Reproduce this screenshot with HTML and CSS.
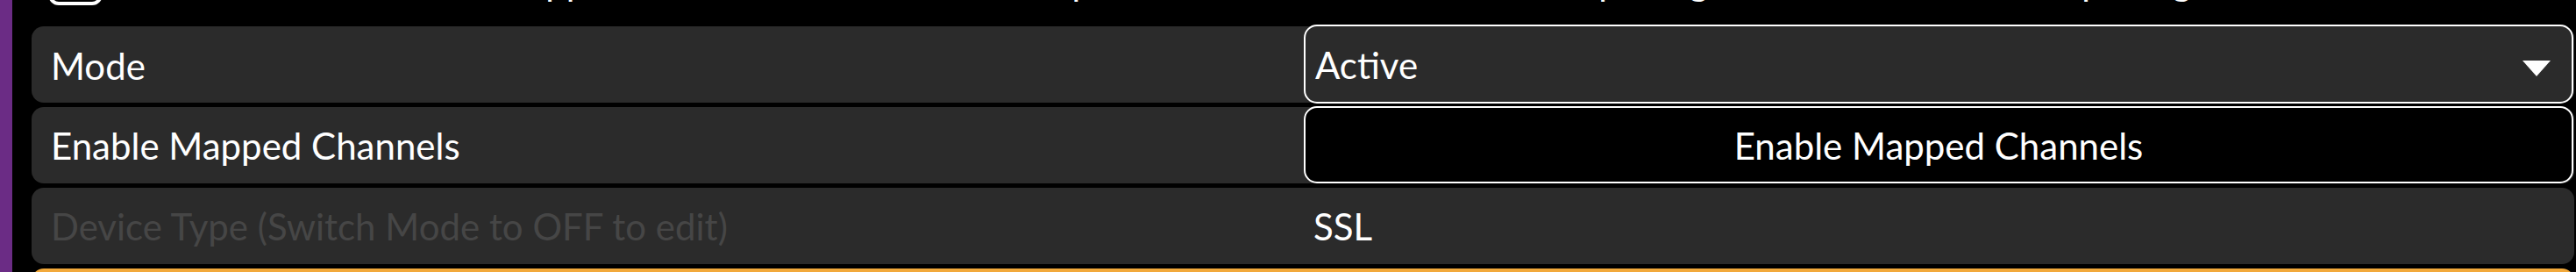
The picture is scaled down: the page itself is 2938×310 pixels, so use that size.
FILE: index.html
```html
<!DOCTYPE html>
<html lang="en">
<head>
  <meta charset="UTF-8">
  <meta name="viewport" content="width=device-width, initial-scale=1.0">
  <title>Device Settings</title>
  <link rel="stylesheet" href="styles.css">
</head>

<body>
  <div class="sidebar"></div>
  <div class="content">
    <div class="prev-row">
      <span class="checkbox"></span>
      <span class="prev-text">Allow the mixer to use Mapped Channels list that will then pass the channel into the device pairing and resets the current pairing to the default state</span>
    </div>

    <div class="settings">
      <div class="row">
        <div class="label">Mode</div>
        <div class="value">
          <div class="select">
            <span>Active</span>
            <svg class="caret" width="32" height="18" viewBox="0 0 32 18">
              <polygon points="0,0 32,0 16,18" fill="#fff"/>
            </svg>
          </div>
        </div>
      </div>

      <div class="row">
        <div class="label">Enable Mapped Channels</div>
        <div class="value">
          <button class="action">Enable Mapped Channels</button>
        </div>
      </div>

      <div class="row">
        <div class="label disabled">Device Type (Switch Mode to OFF to edit)</div>
        <div class="value">
          <span class="plain">SSL</span>
        </div>
      </div>

      <div class="row warning"></div>
    </div>
  </div>
</body>
</html>
```

FILE: styles.css
```css
* {
  box-sizing: border-box;
}

html, body {
  margin: 0;
  height: 100%;
  background-color: #000;
  overflow: hidden;
}

body {
  display: flex;
  font-family: Lato, "Open Sans", sans-serif;
  font-size: 42px;
  color: #fff;
}

.sidebar {
  width: 14px;
  flex-shrink: 0;
  background-color: #6b2c85;
}

.content {
  flex: 1;
  padding: 0 2px 0 22px;
}

.prev-row {
  display: flex;
  align-items: flex-end;
  height: 25px;
  margin-bottom: 5px;
  white-space: nowrap;
}

.checkbox {
  width: 62px;
  height: 62px;
  margin: 0 24px 19px 19px;
  border: 4px solid #fff;
  border-radius: 12px;
  flex-shrink: 0;
}

.prev-text {
  line-height: 42px;
  margin-bottom: 25px;
}

.settings {
  display: flex;
  flex-direction: column;
  gap: 5px;
}

.row {
  display: grid;
  grid-template-columns: 1fr 1fr;
  height: 87px;
  background-color: #2b2b2b;
  border-radius: 14px;
}

.row.warning {
  background-color: #f2a93b;
}

.label {
  display: flex;
  align-items: center;
  padding: 1px 0 0 22px;
}

.label.disabled {
  color: #464646;
}

.value {
  display: flex;
}

.select {
  flex: 1;
  display: flex;
  align-items: center;
  justify-content: space-between;
  height: 90px;
  margin: -2px 1px 0 1px;
  padding: 1px 24px 0 11px;
  background-color: #2b2b2b;
  border: 2px solid #fff;
  border-radius: 15px;
}

.caret {
  margin-top: 8px;
}

.action {
  flex: 1;
  height: 88px;
  margin: -1px 1px 0 1px;
  padding: 2px 0 0;
  font-family: inherit;
  font-size: 42px;
  color: #fff;
  background-color: #000;
  border: 2px solid #fff;
  border-radius: 15px;
  cursor: pointer;
}

.plain {
  display: flex;
  align-items: center;
  padding: 1px 0 0 12px;
}
```
